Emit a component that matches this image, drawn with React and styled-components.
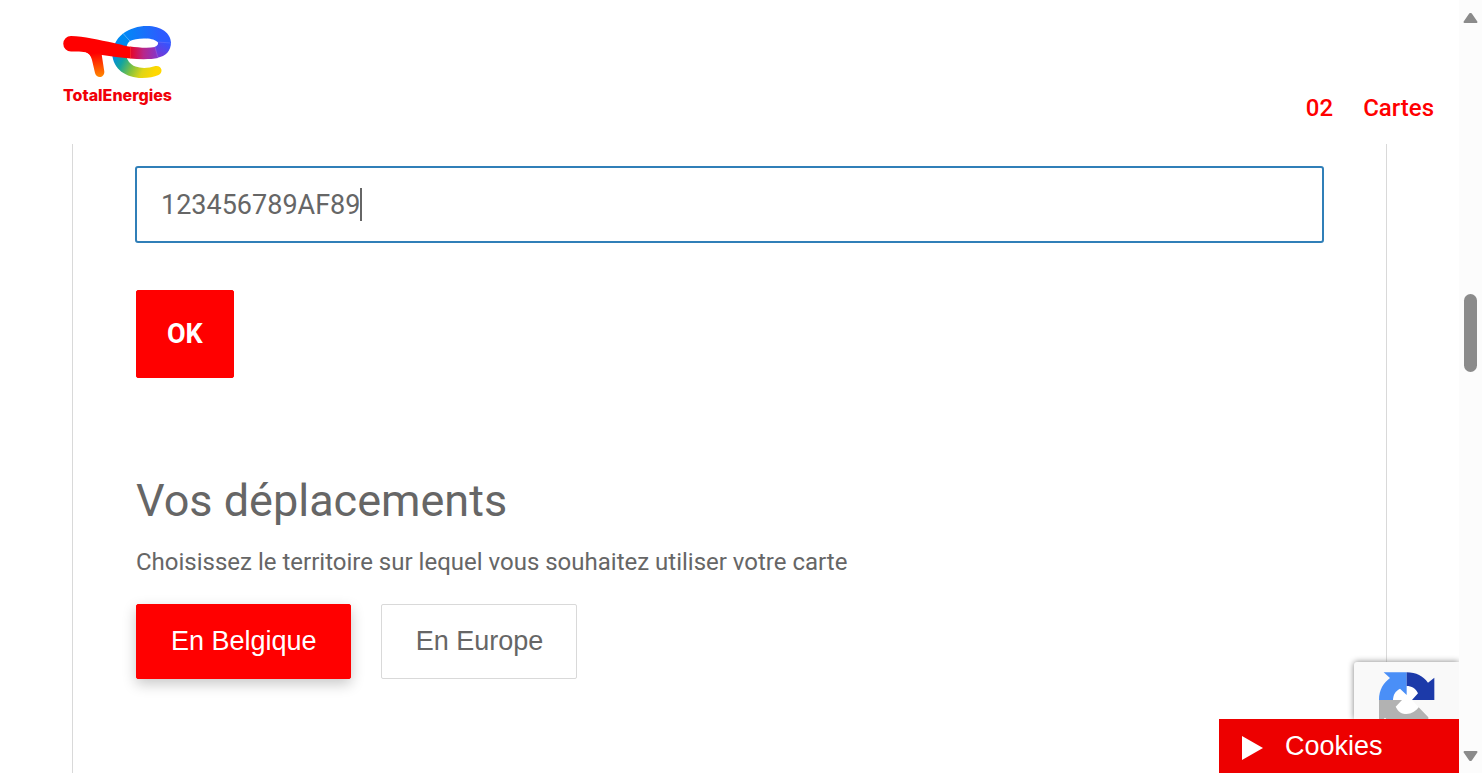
import React, { useState } from "react";
import styled, { createGlobalStyle } from "styled-components";

const GlobalStyle = createGlobalStyle`
  *, *::before, *::after { box-sizing: border-box; }
  body {
    margin: 0;
    background: #fff;
    color: #666;
    font-family: Roboto, sans-serif;
  }
`;

const Shell = styled.div`
  display: flex;
  height: 100vh;
  overflow: hidden;
`;

const Page = styled.div`
  position: relative;
  flex: 1;
  min-width: 0;
  display: flex;
  flex-direction: column;
`;

const Header = styled.header`
  display: flex;
  justify-content: space-between;
  align-items: flex-end;
  height: 144px;
  flex: none;
  padding: 0 25px 20px 63px;
  background: #fff;
`;

const Brand = styled.a`
  display: flex;
  flex-direction: column;
  align-self: flex-start;
  padding-top: 25px;
  color: #f00008;
  text-decoration: none;
  font: 800 16px/20px Inter, sans-serif;
`;

const BrandMark = styled.svg`
  display: block;
  width: 109px;
  height: 54px;
  margin-bottom: 6px;
`;

const Step = styled.nav`
  display: flex;
  gap: 30px;
  color: #f00;
  font-size: 24px;
  font-weight: 500;
  line-height: 32px;
`;

const Panel = styled.main`
  flex: 1;
  margin: 0 72px;
  padding: 22px 62px 0;
  border: solid #d9d9d9;
  border-width: 0 1px;
`;

const Field = styled.label`
  display: flex;
  align-items: center;
  height: 77px;
  padding: 0 24px;
  border: 2px solid #307fb8;
  border-radius: 3px;
  background: #fff;
  cursor: text;
`;

const CardInput = styled.input`
  field-sizing: content;
  height: 35px;
  padding: 1px 0 0;
  border: 0;
  outline: 0;
  background: none;
  color: #666;
  font: 400 27px/33px Roboto, sans-serif;
`;

const Caret = styled.span`
  width: 2px;
  height: 33px;
  background: #666;
`;

const Content = styled.div`
  padding: 47px 1px 0;
`;

const Button = styled.button`
  border: 1px solid ${(p) => (p.$primary ? "#f00" : "#d9d9d9")};
  border-radius: 2px;
  background: ${(p) => (p.$primary ? "#f00" : "#fff")};
  color: ${(p) => (p.$primary ? "#fff" : "#666")};
`;

const SubmitButton = styled(Button)`
  display: block;
  height: 88px;
  padding: 0 30px;
  font: 700 27px/32px Roboto, sans-serif;
`;

const ZoneButton = styled(Button)`
  height: 75px;
  padding: 0 33px 2px 34px;
  box-shadow: ${(p) => (p.$primary ? "0 5px 14px rgba(0, 0, 0, 0.22)" : "none")};
  font: 400 27px/32px "Liberation Sans", Arial, sans-serif;
`;

const Title = styled.h2`
  margin: 95px 0 0;
  font-size: 45px;
  font-weight: 400;
  line-height: 56px;
`;

const Lead = styled.p`
  margin: 17px 0 26px;
  font-size: 24px;
  line-height: 32px;
`;

const Zones = styled.div`
  display: flex;
  gap: 30px;
`;

const Corner = styled.aside`
  position: absolute;
  right: 0;
  bottom: 0;
  display: flex;
  flex-direction: column;
  align-items: flex-end;
`;

const CaptchaBadge = styled.div`
  width: 105px;
  height: 57px;
  padding: 10px 0 0 25px;
  border-radius: 3px 0 0 0;
  background: #f9f9f9;
  box-shadow: 0 0 6px #808080;
  clip-path: inset(-10px 0 0 -10px);

  svg { display: block; }
`;

const CookieButton = styled.button`
  position: relative;
  display: flex;
  align-items: center;
  gap: 22px;
  width: 240px;
  height: 54px;
  padding: 0 23px;
  border: 0;
  background: #ed0000;
  color: #fff;
  font: 400 27px/32px "Liberation Sans", Arial, sans-serif;

  svg { margin-top: 4px; }
`;

const ScrollTrack = styled.div`
  display: flex;
  flex-direction: column;
  align-items: center;
  flex: none;
  width: 23px;
  padding: 12px 0 11px;
  background: #fcfcfc;
`;

const ScrollThumb = styled.div`
  width: 13px;
  height: 78px;
  margin: 270px 0 auto;
  border-radius: 7px;
  background: #8b8b8b;
`;

function Logo() {
  return (
    <BrandMark viewBox="1 0 109 54" aria-hidden="true">
      <defs>
        <linearGradient id="stem" gradientUnits="userSpaceOnUse" x1="35" y1="28" x2="38" y2="52">
          <stop offset="0" stopColor="#f00" />
          <stop offset="1" stopColor="#ff8800" />
        </linearGradient>
        <linearGradient id="top" gradientUnits="userSpaceOnUse" x1="62" y1="0" x2="100" y2="0">
          <stop offset="0" stopColor="#0089f6" />
          <stop offset="1" stopColor="#2e5bff" />
        </linearGradient>
        <linearGradient id="bar" gradientUnits="userSpaceOnUse" x1="66" y1="0" x2="97" y2="0">
          <stop offset="0" stopColor="#f00014" />
          <stop offset="0.5" stopColor="#b8268a" />
          <stop offset="1" stopColor="#8038d0" />
        </linearGradient>
        <linearGradient id="turn" gradientUnits="userSpaceOnUse" x1="104" y1="17" x2="95" y2="32">
          <stop offset="0" stopColor="#3454ff" />
          <stop offset="1" stopColor="#7c36d2" />
        </linearGradient>
        <linearGradient id="tail" gradientUnits="userSpaceOnUse" x1="52" y1="28" x2="92" y2="49">
          <stop offset="0" stopColor="#0088e8" />
          <stop offset="0.25" stopColor="#12a4a0" />
          <stop offset="0.5" stopColor="#7fc241" />
          <stop offset="0.75" stopColor="#e0d516" />
          <stop offset="1" stopColor="#ffd800" />
        </linearGradient>
      </defs>
      <path fill="#0089f0" d="M51 31 C50 22 54 14 61 8.500 L68 16 C64 19 63.500 25 64.500 34 Z" />
      <path fill="url(#top)" d="M61 8.500 C68 3.500 76 1 85 1 C99 1 109 8 109 18 L95.500 17 C92 14 88 13.500 82 13.500 C76 13.500 71 14.500 68 16 Z" />
      <path fill="url(#turn)" d="M109 17 C109 26 104 31 95 33 L92.500 22 C95 21 97 19.500 95.500 16.500 Z" />
      <path fill="url(#bar)" d="M68 21.500 C76 22.500 86 23.500 93 22 L96 33 C89 34.500 78 34.500 68 33.500 Z" />
      <path fill="url(#tail)" d="M50.200 29 C51 44 64 53 80 53 C87 53 92 51.800 96.500 50 C102 47 99.500 40 93.500 41 C86 43.500 79 43.500 73.500 41.500 C68 39.500 65 35 64 30 Z" />
      <path fill="#f00" d="M9 11 C22 11 37 15 52 18 C60 19.800 64 21.300 68.500 21.800 V33.500 C58 32.500 50 31.500 40 30 L30 33 C28 28 24 26.800 17 26.500 L9 26.500 A7.750 7.750 0 0 1 9 11 Z" />
      <path fill="url(#stem)" d="M23 26.500 L39.500 28.500 L42.300 46.500 C42.800 53 34.500 54 33 48 L30 35 C29 31 27 28 23 26.500 Z" />
      <path fill="none" stroke="#fff" strokeOpacity="0.25" strokeWidth="0.500" d="M61 8 L68 16 M95 17 L109 18 M93 22 L96 33 M68.500 21 V34" />
    </BrandMark>
  );
}

function CaptchaLogo() {
  return (
    <svg width="56" height="47" viewBox="0 0 168 141" role="img" aria-label="reCAPTCHA">
      <path fill="#fff" d="M42 84 C43 68 48 58 63 50 L83 42 C98 42 110 49 117 64 L99 84 L119 106 C98 132 62 130 50 104 Z" />
      <path fill="#4a8ff7" d="M14 1 H83 V69 L63 50 C48 58 43 68 42 84 H0 C0 52 14 33 33 18 Z" />
      <path fill="#1c3aa9" d="M83 1 C112 1 132 12 147 32 L166 17 V84 H99 L117 64 C110 49 98 42 83 42 Z" />
      <path fill="#b2b2b2" d="M0 84 H69 L50 104 C58 120 68 126 83 126 C98 126 110 118 119 106 L148 136 V141 H22 L18 137 L14 141 H0 Z" />
    </svg>
  );
}

function ScrollArrow({ down }) {
  return (
    <svg width="15" height="12" viewBox="0 0 15 12" aria-hidden="true">
      <path
        fill="#8b8b8b"
        stroke="#8b8b8b"
        strokeWidth="2"
        strokeLinejoin="round"
        d={down ? "M1.500 2 H13.500 L8 10 H7 Z" : "M7 2 H8 L13.500 10 H1.500 Z"}
      />
    </svg>
  );
}

export default function App() {
  const [number, setNumber] = useState("123456789AF89");
  const [zone, setZone] = useState("En Belgique");

  return (
    <Shell>
      <GlobalStyle />
      <Page>
        <Header>
          <Brand href="#">
            <Logo />
            TotalEnergies
          </Brand>
          <Step aria-label="Étape">
            <span>02</span>
            <span>Cartes</span>
          </Step>
        </Header>
        <Panel>
          <Field>
            <CardInput
              aria-label="Code"
              value={number}
              onChange={(e) => setNumber(e.target.value)}
            />
            <Caret />
          </Field>
          <Content>
            <SubmitButton $primary type="button">OK</SubmitButton>
            <Title>Vos déplacements</Title>
            <Lead>Choisissez le territoire sur lequel vous souhaitez utiliser votre carte</Lead>
            <Zones>
              {["En Belgique", "En Europe"].map((name) => (
                <ZoneButton
                  key={name}
                  type="button"
                  $primary={zone === name}
                  aria-pressed={zone === name}
                  onClick={() => setZone(name)}
                >
                  {name}
                </ZoneButton>
              ))}
            </Zones>
          </Content>
        </Panel>
        <Corner>
          <CaptchaBadge>
            <CaptchaLogo />
          </CaptchaBadge>
          <CookieButton type="button">
            <svg width="21" height="24" viewBox="0 0 21 24" aria-hidden="true">
              <path fill="#fff" d="M0 0 L21 12 L0 24 Z" />
            </svg>
            Cookies
          </CookieButton>
        </Corner>
      </Page>
      <ScrollTrack aria-hidden="true">
        <ScrollArrow />
        <ScrollThumb />
        <ScrollArrow down />
      </ScrollTrack>
    </Shell>
  );
}
